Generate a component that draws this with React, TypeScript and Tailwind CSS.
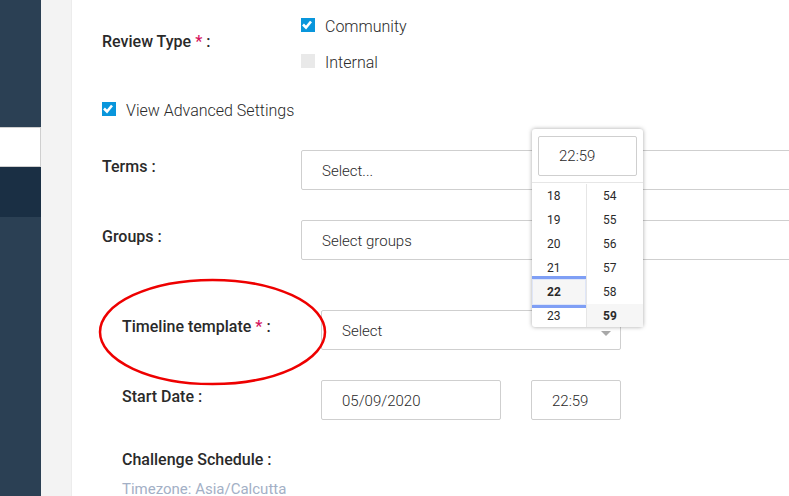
const font = { fontFamily: 'Roboto, sans-serif' };

function Check({ on = true }: { on?: boolean }) {
  return (
    <span className={`flex h-[14px] w-[14px] shrink-0 items-center justify-center ${on ? 'bg-[#0996dc]' : 'bg-[#e9e9e9]'}`}>
      {on && (
        <svg width="14" height="14" viewBox="0 0 14 14">
          <path d="M2 6.5 L5 9.5 L10 3.5" fill="none" stroke="#fff" strokeWidth="2.6" />
        </svg>
      )}
    </span>
  );
}

function Field({ text, className }: { text: string; className: string }) {
  return (
    <div className={`flex h-10 items-center rounded-[2px] border border-[#cfcfcf] bg-white pt-[3px] text-[15px] font-light text-[#2a2a2a] ${className}`}>
      {text}
    </div>
  );
}

function Label({ text, req, className }: { text: string; req?: boolean; className?: string }) {
  return (
    <div className={`text-[16px] leading-5 font-medium text-[#2a2a2a] ${className ?? ''}`}>
      {text}
      {req && <span className="text-[#d6145f]"> *</span>} :
    </div>
  );
}

function TimePicker() {
  const hours = ['18', '19', '20', '21', '22', '23'];
  const mins = ['54', '55', '56', '57', '58', '59'];
  return (
    <div className="absolute top-[129px] left-[532px] w-[111px] rounded-[3px] bg-white shadow-[0_0_4px_rgba(0,0,0,0.35)]">
      <div className="border-b border-[#e6e6e6] px-[6px] pt-[7px] pb-[6px]">
        <div className="flex h-10 w-[99px] items-center rounded-[2px] border border-[#cfcfcf] pl-[20px] text-[15px] font-light text-[#2a2a2a]">22:59</div>
      </div>
      <div className="flex h-[144px] overflow-hidden pt-px text-[12px] text-[#2a2a2a]">
        <div className="w-[55px] border-r border-[#e6e6e6]">
          {hours.map((h) => (
            <div
              key={h}
              className={
                h === '22'
                  ? 'relative z-10 -my-[4px] flex h-[32px] items-center border-y-[3px] border-[#7f9ff5] bg-[#f6f6f6] pl-[15px] font-bold shadow-[inset_0_0_0_1px_#dfe6f8]'
                  : 'flex h-6 items-center pl-[15px]'
              }
            >
              {h}
            </div>
          ))}
        </div>
        <div className="w-[56px]">
          {mins.map((m) => (
            <div key={m} className={m === '59' ? 'flex h-6 items-center bg-[#f6f6f6] pl-4 font-bold' : 'flex h-6 items-center pl-4'}>
              {m}
            </div>
          ))}
        </div>
      </div>
    </div>
  );
}

export default function App() {
  return (
    <div className="relative flex h-[496px] w-[789px] overflow-hidden bg-white" style={font}>
      {/* Sidebar */}
      <div className="w-[41px] shrink-0 bg-[#2b4054] pt-[127px]">
        <div className="h-10 border-y border-r border-[#cfcfcf] bg-white" />
        <div className="h-[50px] bg-[#1a2f44]" />
      </div>
      <div className="w-[31px] shrink-0 border-r border-[#ececec] bg-[#f3f3f3]" />

      {/* Form */}
      <div className="flex-1 pl-[30px]">
        <div className="flex h-[84px] items-start pt-[18px]">
          <Label text="Review Type" req className="mt-[14px] w-[199px]" />
          <div className="flex flex-col gap-[22px] text-[16px] leading-[14px] font-light text-[#2a2a2a]">
            <div className="flex items-center gap-[10px]"><Check /><span className="translate-y-[2px]">Community</span></div>
            <div className="flex items-center gap-[10px]"><Check on={false} /><span className="translate-y-[2px]">Internal</span></div>
          </div>
        </div>
        <div className="mt-[18px] flex items-center gap-[10px] text-[16px] leading-[14px] font-light text-[#2a2a2a]">
          <Check /><span className="translate-y-[2px]">View Advanced Settings</span>
        </div>
        <div className="mt-[34px] flex items-start">
          <Label text="Terms" className="mt-[7px] w-[199px]" />
          <Field text="Select..." className="w-[520px] pl-[20px]" />
        </div>
        <div className="mt-[30px] flex items-start">
          <Label text="Groups" className="mt-[7px] w-[199px]" />
          <Field text="Select groups" className="w-[520px] pl-[20px]" />
        </div>
        <div className="mt-[50px] flex items-start pl-[20px]">
          <Label text="Timeline template" req className="mt-[7px] w-[199px]" />
          <div className="relative">
            <Field text="Select" className="w-[300px] pl-[20px]" />
            <span className="absolute top-[21px] right-[10px] h-0 w-0 border-x-[5px] border-t-[5px] border-x-transparent border-t-[#a8a8a8]" />
          </div>
        </div>
        <div className="mt-[30px] flex items-start pl-[20px]">
          <Label text="Start Date" className="mt-[7px] w-[199px]" />
          <Field text="05/09/2020" className="w-[180px] pl-[20px]" />
          <Field text="22:59" className="ml-[30px] w-[90px] pl-[20px]" />
        </div>
        <div className="mt-[30px] pl-[20px]">
          <Label text="Challenge Schedule" />
          <div className="mt-[12px] text-[15px] leading-[14px] text-[#a3b0c6]">Timezone: Asia/Calcutta</div>
        </div>
      </div>

      <TimePicker />

      {/* Red annotation */}
      <svg className="absolute top-[278px] left-[98px]" width="230" height="108" viewBox="0 0 230 108">
        <ellipse cx="114.5" cy="54" rx="112.5" ry="52" fill="none" stroke="#ee0000" strokeWidth="2.5" />
      </svg>
    </div>
  );
}
